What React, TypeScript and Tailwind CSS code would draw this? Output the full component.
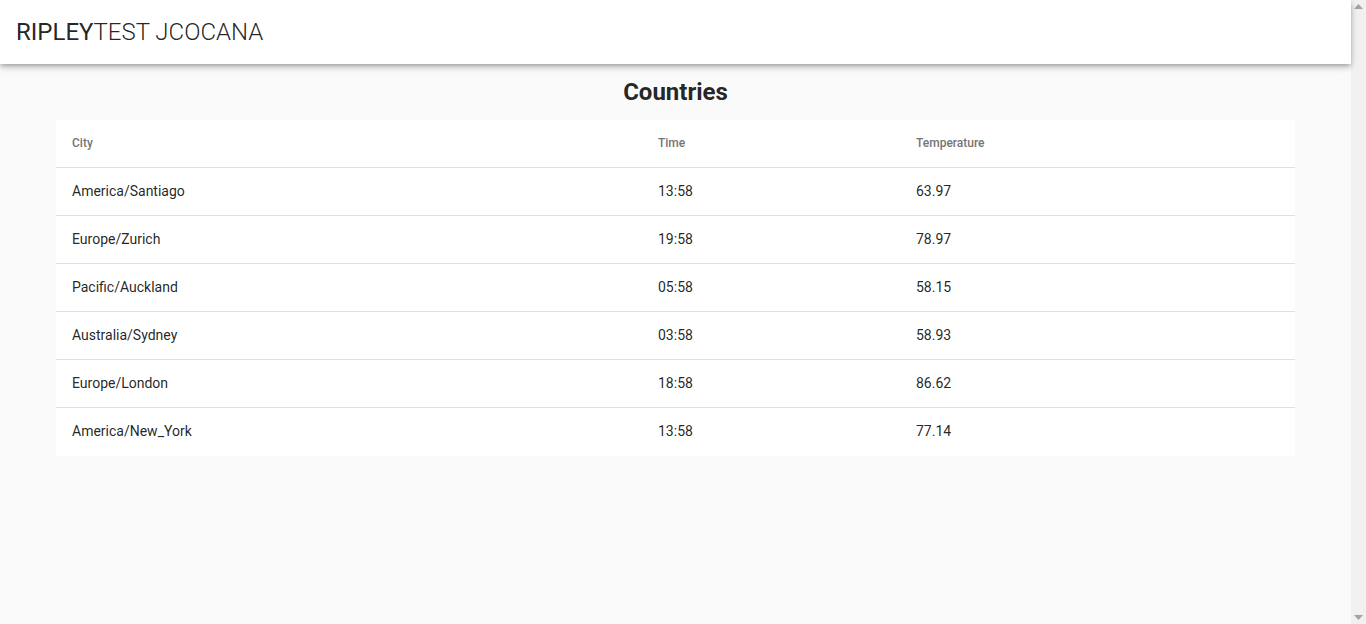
import React from "react";

interface CityRow {
  city: string;
  time: string;
  temperature: string;
}

const rows: CityRow[] = [
  { city: "America/Santiago", time: "13:58", temperature: "63.97" },
  { city: "Europe/Zurich", time: "19:58", temperature: "78.97" },
  { city: "Pacific/Auckland", time: "05:58", temperature: "58.15" },
  { city: "Australia/Sydney", time: "03:58", temperature: "58.93" },
  { city: "Europe/London", time: "18:58", temperature: "86.62" },
  { city: "America/New_York", time: "13:58", temperature: "77.14" },
];

const App: React.FC = () => {
  return (
    <div className="flex h-screen overflow-hidden bg-[#fafafa] font-['Roboto',sans-serif] text-[rgba(0,0,0,0.87)]">
      <div className="min-w-0 flex-1">
        <header className="relative z-10 flex h-16 items-center bg-white px-4 shadow-[0_2px_4px_-1px_rgba(0,0,0,0.2),0_4px_5px_0_rgba(0,0,0,0.14),0_1px_10px_0_rgba(0,0,0,0.12)]">
          <h1 className="text-[24px] leading-none tracking-normal">
            <span className="font-normal">RIPLEY</span>
            <span className="font-light">TEST JCOCANA</span>
          </h1>
        </header>

        <main className="px-14">
          <h2 className="pt-[14px] pb-[14px] text-center text-[24px] font-bold leading-7">
            Countries
          </h2>
          <table className="w-full border-collapse bg-white text-left">
            <thead>
              <tr className="h-[47px] border-b border-[#e0e0e0]">
                <th className="w-[586px] pl-4 text-[12px] font-medium text-[#757575]">City</th>
                <th className="w-[258px] pl-4 text-[12px] font-medium text-[#757575]">Time</th>
                <th className="pl-4 text-[12px] font-medium text-[#757575]">Temperature</th>
              </tr>
            </thead>
            <tbody>
              {rows.map((row, i) => (
                <tr
                  key={row.city}
                  className={
                    i < rows.length - 1
                      ? "h-12 border-b border-[#e0e0e0]"
                      : "h-12 border-b border-white"
                  }
                >
                  <td className="pl-4 text-[14px]">{row.city}</td>
                  <td className="pl-4 text-[14px]">{row.time}</td>
                  <td className="pl-4 text-[14px]">{row.temperature}</td>
                </tr>
              ))}
            </tbody>
          </table>
        </main>
      </div>

      {/* classic scrollbar track, no thumb */}
      <div className="flex w-[15px] shrink-0 flex-col items-center justify-between bg-[#f1f1f1] py-[4px]">
        <svg width="9" height="5" viewBox="0 0 9 5" className="fill-[#a3a3a3]">
          <path d="M4.5 0L9 5H0z" />
        </svg>
        <svg width="9" height="5" viewBox="0 0 9 5" className="fill-[#a3a3a3]">
          <path d="M0 0h9L4.5 5z" />
        </svg>
      </div>
    </div>
  );
};

export default App;
